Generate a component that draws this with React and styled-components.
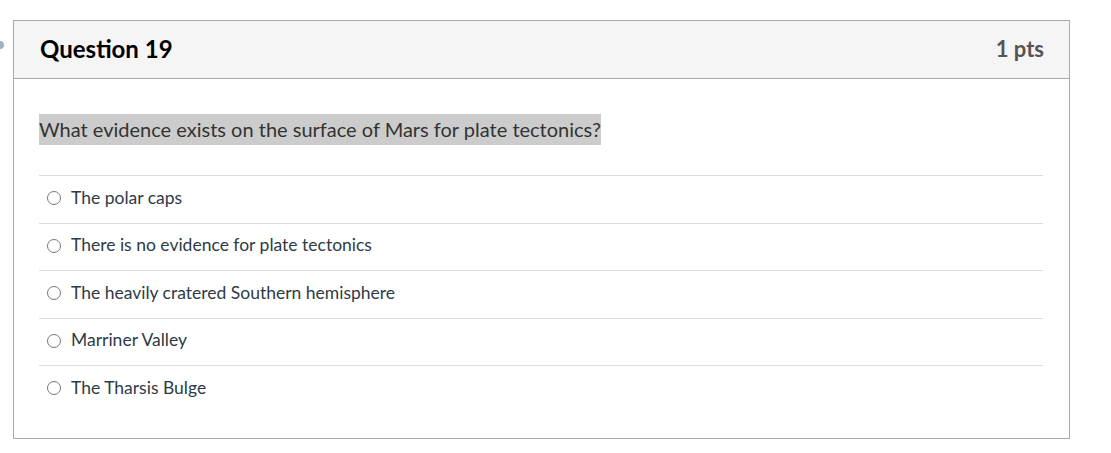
import React from 'react';
import styled, { createGlobalStyle } from 'styled-components';

const GlobalStyle = createGlobalStyle`
  body {
    margin: 0;
    background: #ffffff;
    font-family: 'Lato', 'Liberation Sans', sans-serif;
  }
`;

const Page = styled.div`
  position: relative;
  padding: 20px 0 0 13px;
`;

const SideDot = styled.span`
  position: absolute;
  left: -4px;
  top: 41px;
  width: 8px;
  height: 8px;
  border-radius: 50%;
  background: #9fb1c2;
`;

const Card = styled.div`
  width: 1055px;
  border: 1px solid #aaaaaa;
  background: #ffffff;
`;

const Header = styled.div`
  display: flex;
  justify-content: space-between;
  align-items: center;
  height: 57px;
  padding: 0 25px 0 26px;
  background: #f5f5f5;
  border-bottom: 1px solid #aaaaaa;
`;

const Title = styled.h2`
  margin: 0 0 2px;
  font-size: 24px;
  font-weight: 700;
  color: #000000;
`;

const Points = styled.span`
  margin-bottom: 2px;
  font-size: 22px;
  font-weight: 700;
  color: #555555;
`;

const Body = styled.div`
  padding: 35px 26px 25px 25px;
`;

const Prompt = styled.div`
  margin-bottom: 30px;
`;

const Highlight = styled.span`
  display: inline-block;
  line-height: 31px;
  font-size: 20px;
  color: #333333;
  background: #cccccc;
`;

const Answers = styled.div`
  display: flex;
  flex-direction: column;
`;

const Answer = styled.label`
  display: flex;
  align-items: center;
  gap: 10px;
  height: 47.5px;
  padding: 0 0 4px 8px;
  box-sizing: border-box;
  border-top: 1px solid #dddddd;
  font-size: 17.5px;
  color: #2d3b45;
`;

const Radio = styled.span`
  width: 12px;
  height: 12px;
  margin-top: 2px;
  border: 1px solid #777777;
  border-radius: 50%;
  flex: none;
`;

const answers = [
  'The polar caps',
  'There is no evidence for plate tectonics',
  'The heavily cratered Southern hemisphere',
  'Marriner Valley',
  'The Tharsis Bulge',
];

function App() {
  return (
    <Page>
      <GlobalStyle />
      <SideDot />
      <Card>
        <Header>
          <Title>Question 19</Title>
          <Points>1 pts</Points>
        </Header>
        <Body>
          <Prompt>
            <Highlight>What evidence exists on the surface of Mars for plate tectonics?</Highlight>
          </Prompt>
          <Answers>
            {answers.map((a) => (
              <Answer key={a}>
                <Radio />
                {a}
              </Answer>
            ))}
          </Answers>
        </Body>
      </Card>
    </Page>
  );
}

export default App;
